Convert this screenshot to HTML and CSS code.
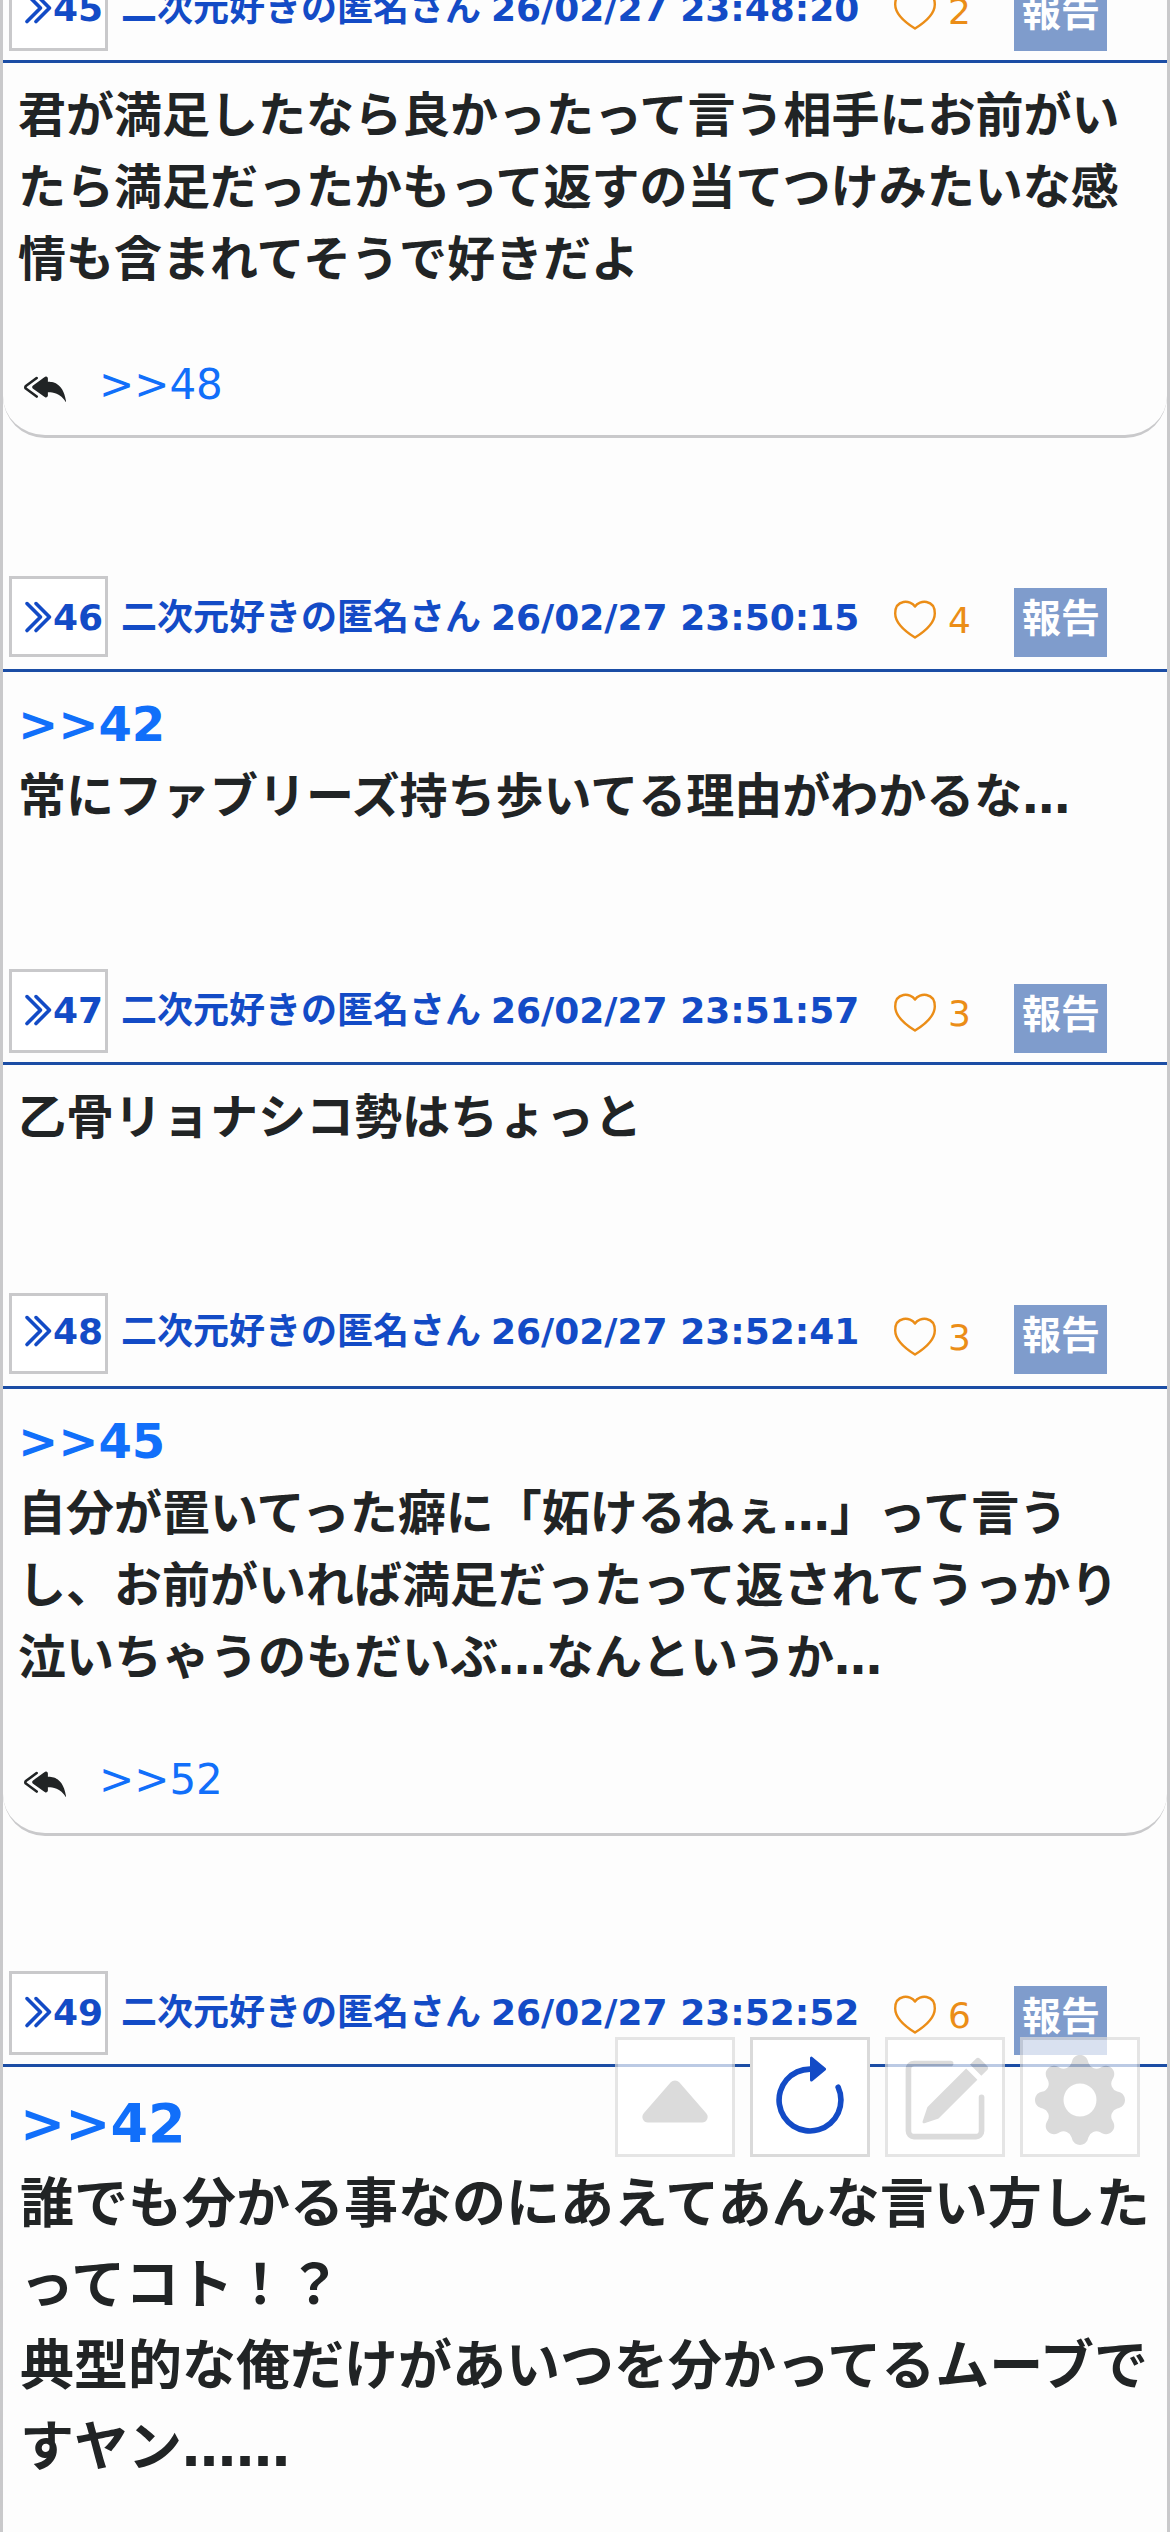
FILE: index.html
```html
<!DOCTYPE html>
<html lang="ja">
<head>
<meta charset="utf-8">
<title>スレッド</title>
<link rel="stylesheet" href="styles.css">
</head>
<body>
<svg class="defs" aria-hidden="true">
  <symbol id="chevrons" viewBox="0 0 16 16">
    <path d="M3.646 1.646a.5.5 0 0 1 .708 0l6 6a.5.5 0 0 1 0 .708l-6 6a.5.5 0 0 1-.708-.708L9.293 8 3.646 2.354a.5.5 0 0 1 0-.708z"/>
    <path d="M7.646 1.646a.5.5 0 0 1 .708 0l6 6a.5.5 0 0 1 0 .708l-6 6a.5.5 0 0 1-.708-.708L13.293 8 7.646 2.354a.5.5 0 0 1 0-.708z"/>
  </symbol>
  <symbol id="heart" viewBox="0 0 42 39">
    <path d="M21 6.500C16.500 -.5 1.200 -.8 1.200 13.500C1.200 22.500 10.500 31 21 37.600C31.500 31 40.800 22.500 40.800 13.500C40.800 -.8 25.500 -.5 21 6.500Z" fill="none" stroke="currentColor" stroke-width="2.4" stroke-linejoin="round"/>
  </symbol>
  <symbol id="reply-all" viewBox="0 0 16 16">
    <path d="M8.021 11.9 3.453 8.62a.719.719 0 0 1 0-1.238L8.021 4.1a.716.716 0 0 1 1.079.619V6c1.5 0 6 0 7 8-2.5-4.500-7-4-7-4v1.281c0 .56-.606.898-1.079.62z"/>
    <path d="M5.232 4.293a.5.5 0 0 1-.106.7L1.114 7.945l-.042.028a.147.147 0 0 0 0 .252l.042.028 4.012 2.954a.5.5 0 1 1-.593.805L.539 9.073a1.147 1.147 0 0 1 0-1.946l3.994-2.940a.5.5 0 0 1 .699.106z"/>
  </symbol>
</svg>

<main class="thread">
  <article class="post post-45">
    <header class="head">
      <a class="num"><svg><use href="#chevrons"/></svg>45</a>
      <span class="meta"><span>二次元好きの匿名さん</span><time>26/02/27 23:48:20</time></span>
      <span class="like"><svg><use href="#heart"/></svg>2</span>
      <button class="report">報告</button>
    </header>
    <div class="body">君が満足したなら良かったって言う相手にお前がいたら満足だったかもって返すの当てつけみたいな感情も含まれてそうで好きだよ</div>
    <div class="replies"><svg><use href="#reply-all"/></svg><a>&gt;&gt;48</a></div>
  </article>

  <article class="post post-46">
    <header class="head tight">
      <a class="num"><svg><use href="#chevrons"/></svg>46</a>
      <span class="meta"><span>二次元好きの匿名さん</span><time>26/02/27 23:50:15</time></span>
      <span class="like"><svg><use href="#heart"/></svg>4</span>
      <button class="report">報告</button>
    </header>
    <div class="body"><a>&gt;&gt;42</a><br>常にファブリーズ持ち歩いてる理由がわかるな…</div>
  </article>

  <article class="post post-47">
    <header class="head">
      <a class="num"><svg><use href="#chevrons"/></svg>47</a>
      <span class="meta"><span>二次元好きの匿名さん</span><time>26/02/27 23:51:57</time></span>
      <span class="like"><svg><use href="#heart"/></svg>3</span>
      <button class="report">報告</button>
    </header>
    <div class="body">乙骨リョナシコ勢はちょっと</div>
  </article>

  <article class="post post-48">
    <header class="head tight raised">
      <a class="num"><svg><use href="#chevrons"/></svg>48</a>
      <span class="meta"><span>二次元好きの匿名さん</span><time>26/02/27 23:52:41</time></span>
      <span class="like"><svg><use href="#heart"/></svg>3</span>
      <button class="report">報告</button>
    </header>
    <div class="body"><a>&gt;&gt;45</a><br>自分が置いてった癖に「妬けるねぇ…」って言うし、お前がいれば満足だったって返されてうっかり泣いちゃうのもだいぶ…なんというか…</div>
    <div class="replies"><svg><use href="#reply-all"/></svg><a>&gt;&gt;52</a></div>
  </article>

  <article class="post post-49">
    <header class="head">
      <a class="num"><svg><use href="#chevrons"/></svg>49</a>
      <span class="meta"><span>二次元好きの匿名さん</span><time>26/02/27 23:52:52</time></span>
      <span class="like"><svg><use href="#heart"/></svg>6</span>
      <button class="report">報告</button>
    </header>
    <div class="body large"><a>&gt;&gt;42</a><br>誰でも分かる事なのにあえてあんな言い方したってコト！？<br>典型的な俺だけがあいつを分かってるムーブですヤン……</div>
  </article>
</main>

<nav class="tools">
  <button class="tool" aria-label="上へ"><svg viewBox="0 0 16 16"><path d="m7.247 4.860-4.796 5.481c-.566.647-.106 1.659.753 1.659h9.592a1 1 0 0 0 .753-1.659l-4.796-5.480a1 1 0 0 0-1.506 0z"/></svg></button>
  <button class="tool active" aria-label="更新"><svg viewBox="0 0 16 16"><path d="M8 3a5 5 0 1 0 4.546 2.914.5.5 0 0 1 .908-.417A6 6 0 1 1 8 2z"/><path d="M8 4.466V.534a.25.25 0 0 1 .41-.192l2.360 1.966c.12.1.12.284 0 .384L8.410 4.658A.25.25 0 0 1 8 4.466z"/></svg></button>
  <button class="tool" aria-label="書き込む"><svg viewBox="0 0 16 16"><path d="M15.502 1.940a.5.5 0 0 1 0 .706L14.459 3.690l-2-2L13.502.646a.5.5 0 0 1 .707 0l1.293 1.293zm-1.750 2.456-2-2L4.939 9.210a.5.5 0 0 0-.121.196l-.805 2.414a.25.25 0 0 0 .316.316l2.414-.805a.5.5 0 0 0 .196-.12l6.813-6.814z"/><path d="M1 13.500A1.500 1.500 0 0 0 2.500 15h11a1.500 1.500 0 0 0 1.500-1.500v-6a.5.5 0 0 0-1 0v6a.5.5 0 0 1-.5.5h-11a.5.5 0 0 1-.5-.5v-11a.5.5 0 0 1 .5-.5H9a.5.5 0 0 0 0-1H2.500A1.500 1.500 0 0 0 1 2.500z"/></svg></button>
  <button class="tool" aria-label="設定"><svg viewBox="0 0 16 16"><path d="M9.405 1.050c-.413-1.400-2.397-1.400-2.810 0l-.1.340a1.464 1.464 0 0 1-2.105.872l-.31-.17c-1.283-.698-2.686.705-1.987 1.987l.169.311c.446.820.023 1.841-.872 2.105l-.34.1c-1.400.413-1.400 2.397 0 2.810l.34.1a1.464 1.464 0 0 1 .872 2.105l-.17.310c-.698 1.283.705 2.686 1.987 1.987l.311-.169a1.464 1.464 0 0 1 2.105.872l.1.340c.413 1.400 2.397 1.400 2.810 0l.1-.34a1.464 1.464 0 0 1 2.105-.872l.310.17c1.283.698 2.686-.705 1.987-1.987l-.169-.311a1.464 1.464 0 0 1 .872-2.105l.340-.1c1.400-.413 1.400-2.397 0-2.810l-.34-.1a1.464 1.464 0 0 1-.872-2.105l.17-.31c.698-1.283-.705-2.686-1.987-1.987l-.311.169a1.464 1.464 0 0 1-2.105-.872zM8 10.930a2.929 2.929 0 1 1 0-5.860 2.929 2.929 0 0 1 0 5.858z"/></svg></button>
</nav>
</body>
</html>
```
FILE: styles.css
```css
* {
  box-sizing: border-box;
}

body {
  margin: 0;
  height: 2532px;
  overflow: hidden;
  background: #fdfdfd;
  color: #212425;
  font-family: "DejaVu Sans", "Noto Sans CJK JP", sans-serif;
}

button {
  padding: 0;
  border: 0;
  font: inherit;
}

.defs {
  position: absolute;
  width: 0;
  height: 0;
}

.thread {
  display: flow-root;
  height: 2532px;
  overflow: hidden;
  border: solid #c9c9cb;
  border-width: 0 3px;
}

.post-45 { margin-top: -33px; height: 471px; }
.post-46 { margin-top: 138px; height: 257px; }
.post-47 { margin-top: 136px; height: 188px; }
.post-48 { margin-top: 136px; height: 543px; }
.post-49 { margin-top: 135px; }

.post {
  display: flex;
  flex-direction: column;
}

.head {
  display: flex;
  align-items: flex-end;
  height: 96px;
  padding: 0 60px 9px 6px;
  border-bottom: 3px solid #1b4da5;
  color: #134bc6;
  font-size: 36px;
  line-height: 55px;
  white-space: nowrap;
}

.head.tight {
  padding-bottom: 12px;
}

.num {
  display: flex;
  align-self: stretch;
  width: 99px;
  padding: 11px 0 0 6px;
  border: 3px solid #c9c9cb;
  background: #fff;
  font-weight: bold;
}

.num svg {
  flex: none;
  width: 36px;
  height: 36px;
  margin: 9px -1px 0 0;
  fill: currentColor;
  stroke: currentColor;
  stroke-width: .6;
}

.meta {
  display: flex;
  gap: 10px;
  align-self: flex-start;
  margin: 14px 0 0 13px;
  font-weight: bold;
}

.raised .num {
  padding-top: 8px;
}

.raised .meta {
  margin-top: 11px;
}

.like {
  display: flex;
  align-self: flex-start;
  width: 120px;
  margin: 17px 0 0 auto;
  color: #eb8d17;
}

.like svg {
  width: 42px;
  height: 39px;
  margin: 7px 12px 0 0;
}

.report {
  width: 93px;
  height: 69px;
  padding: 0 0 7px 1px;
  background: #7f9ccc;
  color: #fff;
  font-size: 39px;
  font-weight: bold;
  line-height: 60px;
}

.body {
  padding: 16px 15px 0;
  font-size: 48px;
  font-weight: bold;
  line-height: 72px;
}

.body.large {
  padding: 16px 16px 0 17px;
  font-size: 54px;
  line-height: 81px;
}

a {
  text-decoration: none;
}

.body a,
.replies a {
  color: #116ffa;
}

.replies {
  display: flex;
  align-items: center;
  gap: 33px;
  height: 96px;
  margin-top: auto;
  padding: 0 21px 3px;
  border-bottom: 3px solid #c9c9cb;
  border-radius: 0 0 42px 42px;
  font-size: 42px;
}

.replies a {
  padding-bottom: 6px;
}

.post-48 .replies {
  padding-bottom: 9px;
}

.replies svg {
  width: 42px;
  height: 42px;
  fill: currentColor;
}

.tools {
  position: fixed;
  top: 2037px;
  right: 30px;
  display: flex;
  gap: 15px;
}

.tool {
  display: grid;
  width: 120px;
  height: 120px;
  padding: 15px 12px 9px;
  border: 3px solid #dadada;
  background: #fff;
  color: #ccc;
  opacity: .7;
}

.tool.active {
  color: #134bc6;
  opacity: 1;
}

.tool svg {
  width: 90px;
  height: 90px;
  fill: currentColor;
}
```
